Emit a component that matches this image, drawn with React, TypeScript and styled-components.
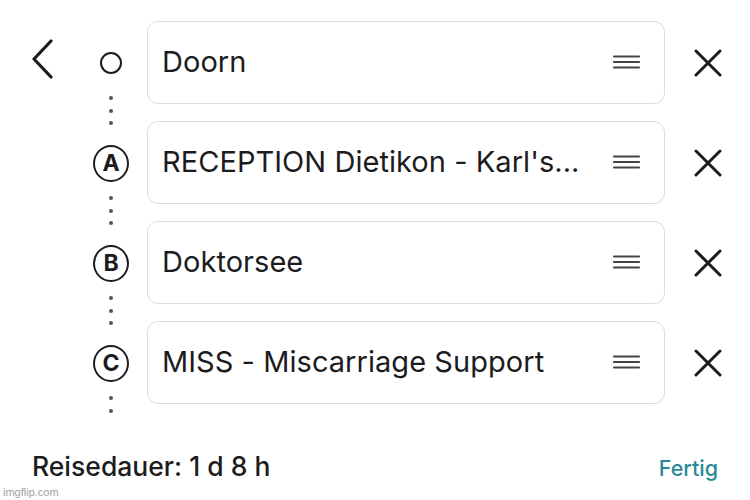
import React from 'react';
import styled, { createGlobalStyle } from 'styled-components';

const GlobalStyle = createGlobalStyle`
  html, body {
    margin: 0;
    padding: 0;
    background: #ffffff;
  }
  body {
    font-family: Inter, "Noto Sans", "Liberation Sans", sans-serif;
    color: #1c1c1e;
  }
`;

const Page = styled.div`
  width: 750px;
  height: 500px;
  position: relative;
  overflow: hidden;
  background: #fff;
  padding-top: 21px;
  box-sizing: border-box;
`;

const Stops = styled.div`
  display: grid;
  grid-template-columns: 75px 72px 518px 86px;
  grid-auto-rows: 83px;
  row-gap: 17px;
`;

const BackCell = styled.div`
  display: flex;
  align-items: center;
  padding-left: 30px;
  padding-bottom: 8px;
`;

const MarkerCell = styled.div`
  display: flex;
  flex-direction: column;
  align-items: center;
  padding-top: 24px;
`;

const MarkerSlot = styled.div`
  flex-shrink: 0;
  width: 36px;
  height: 36px;
  display: flex;
  align-items: center;
  justify-content: center;
`;

const OpenDot = styled.div`
  width: 18px;
  height: 18px;
  border: 2.5px solid #1c1c1e;
  border-radius: 50%;
`;

const Letter = styled.div`
  width: 33px;
  height: 33px;
  border: 2px solid #1c1c1e;
  border-radius: 50%;
  display: flex;
  align-items: center;
  justify-content: center;
  font-size: 23px;
  font-weight: 700;
  line-height: 1;
`;

const Dots = styled.div`
  flex-shrink: 0;
  display: flex;
  flex-direction: column;
  align-items: center;
  gap: 8.5px;
  margin-top: 15px;
`;

const Dot = styled.span`
  flex-shrink: 0;
  width: 4px;
  height: 4px;
  border-radius: 50%;
  background: #555;
`;

const Field = styled.div`
  display: flex;
  align-items: center;
  border: 1.5px solid #dcdcdf;
  border-radius: 11px;
  padding: 0 24px 2px 14px;
  min-width: 0;
`;

const FieldText = styled.span`
  flex: 1;
  font-size: 29px;
  letter-spacing: 0.05px;
  white-space: nowrap;
  padding-right: 20px;
`;

const RemoveCell = styled.div`
  display: flex;
  align-items: center;
  justify-content: center;
  padding-right: 1px;
`;

const Footer = styled.div`
  display: flex;
  justify-content: space-between;
  align-items: baseline;
  margin-top: 46px;
  padding: 0 32px 0 32px;
`;

const Duration = styled.span`
  font-size: 26.5px;
  font-weight: 500;
`;

const Done = styled.span`
  font-size: 21.5px;
  font-weight: 500;
  color: #2a8899;
`;

const Watermark = styled.div`
  position: absolute;
  left: 3px;
  bottom: 2px;
  font-family: "Liberation Sans", Arial, sans-serif;
  font-size: 11px;
  color: #a0a0a0;
`;

const Chevron = () => (
  <svg width="24" height="40" viewBox="0 0 24 40" fill="none">
    <path d="M21 2 L4 20 L21 38" stroke="#1c1c1e" strokeWidth="3.2" strokeLinecap="round" strokeLinejoin="round" />
  </svg>
);

const Grip = () => (
  <svg width="27" height="14" viewBox="0 0 27 14">
    <rect x="0" y="0.5" width="27" height="2" rx="0.8" fill="#444" />
    <rect x="0" y="6" width="27" height="2" rx="0.8" fill="#444" />
    <rect x="0" y="11.5" width="27" height="2" rx="0.8" fill="#444" />
  </svg>
);

const Cross = () => (
  <svg width="28" height="28" viewBox="0 0 28 28">
    <path d="M2 2 L26 26 M26 2 L2 26" stroke="#1c1c1e" strokeWidth="3" strokeLinecap="round" />
  </svg>
);

const stops = [
  { marker: '', label: 'Doorn', dots: 3 },
  { marker: 'A', label: "RECEPTION Dietikon - Karl's...", dots: 3 },
  { marker: 'B', label: 'Doktorsee', dots: 3 },
  { marker: 'C', label: 'MISS - Miscarriage Support', dots: 2 },
];

export default function App() {
  return (
    <>
      <GlobalStyle />
      <Page>
        <Stops>
          {stops.map((s, i) => (
            <React.Fragment key={s.label}>
              <BackCell>{i === 0 && <Chevron />}</BackCell>
              <MarkerCell>
                <MarkerSlot>{s.marker ? <Letter>{s.marker}</Letter> : <OpenDot />}</MarkerSlot>
                <Dots>
                  {Array.from({ length: s.dots }).map((_, d) => (
                    <Dot key={d} />
                  ))}
                </Dots>
              </MarkerCell>
              <Field>
                <FieldText>{s.label}</FieldText>
                <Grip />
              </Field>
              <RemoveCell>
                <Cross />
              </RemoveCell>
            </React.Fragment>
          ))}
        </Stops>
        <Footer>
          <Duration>Reisedauer: 1 d 8 h</Duration>
          <Done>Fertig</Done>
        </Footer>
        <Watermark>imgflip.com</Watermark>
      </Page>
    </>
  );
}
